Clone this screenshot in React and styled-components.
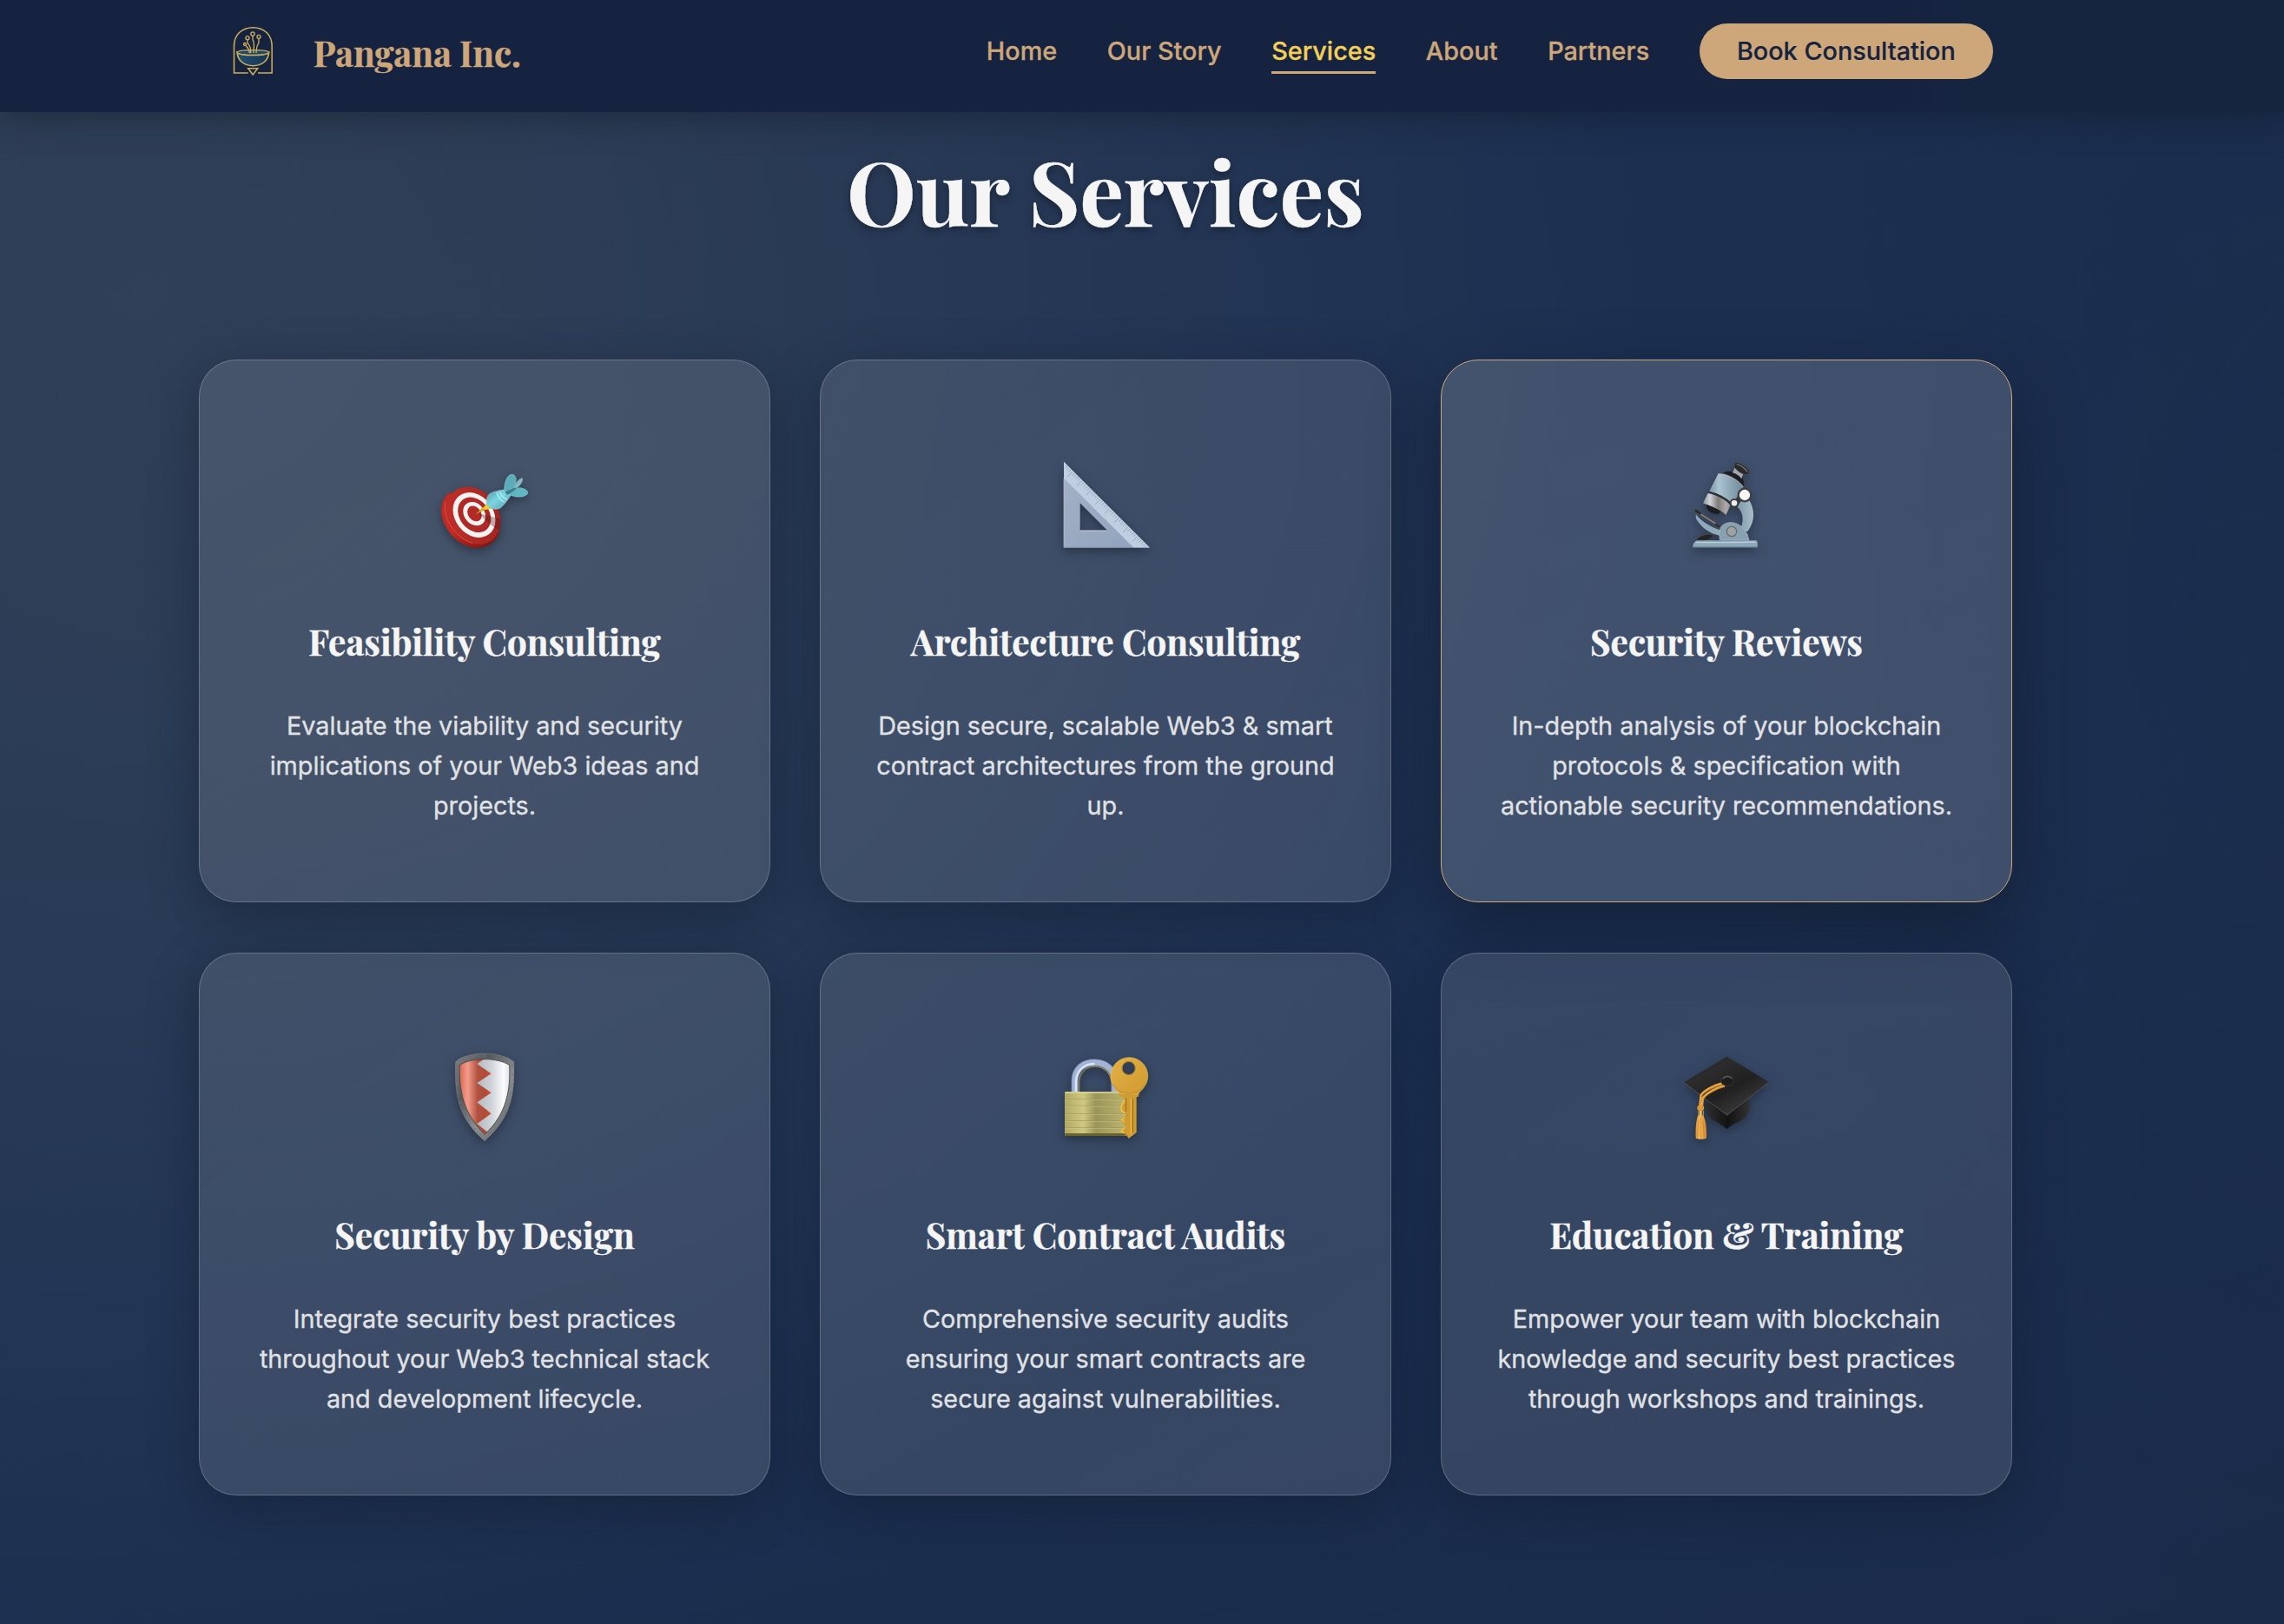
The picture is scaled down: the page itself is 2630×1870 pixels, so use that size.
import React from "react";
import styled, { createGlobalStyle } from "styled-components";

const serif = `"Playfair Display", "Liberation Serif", serif`;
const sans = `Inter, "Liberation Sans", sans-serif`;
const navy = "#152340";
const tan = "#cda67a";

const GlobalStyle = createGlobalStyle`
  *, *::before, *::after { box-sizing: border-box; }
  body { margin: 0; background: #1b2d50; font-family: ${sans}; overflow: hidden; }
  h1, h2, p { margin: 0; }
`;

const Page = styled.div`
  min-height: 1870px;
  background:
    radial-gradient(ellipse 1750px 1600px at 160px 330px, rgba(192, 186, 138, 0.12) 0%, rgba(192, 186, 138, 0.1) 30%, rgba(192, 186, 138, 0) 100%),
    radial-gradient(ellipse 700px 1300px at 2700px 700px, rgba(20, 30, 55, 0.22), rgba(20, 30, 55, 0)),
    linear-gradient(165deg, #1c2e50 0%, #1c3052 60%, #1a2b4a 100%);
`;

const Header = styled.header`
  position: relative;
  z-index: 2;
  height: 129px;
  padding: 27px 335px 0 267px;
  display: flex;
  justify-content: space-between;
  align-items: flex-start;
  background: linear-gradient(90deg, ${navy} 80%, #15253e 100%);
  box-shadow: 0 7px 36px rgba(14, 24, 36, 0.45);
`;

const Brand = styled.div`
  display: flex;
  align-items: center;
  gap: 45px;
  height: 64px;
`;

const BrandName = styled.span`
  padding-top: 2px;
  font: 700 40.32px/52px ${serif};
  color: ${tan};
  -webkit-text-stroke: 0.4px ${tan};
`;

const Nav = styled.nav`
  display: flex;
  align-items: center;
  height: 64px;
  gap: 57.6px;
`;

const NavLink = styled.a`
  font: 500 28.8px/46px ${sans};
  color: ${(p) => (p.$active ? "#f4cf58" : tan)};
  padding-top: 3px;
  border-bottom: 3px solid ${(p) => (p.$active ? tan : "transparent")};
  -webkit-text-stroke: 0.3px currentColor;
  white-space: nowrap;
`;

const BookButton = styled.button`
  height: 64px;
  padding: 0 43.2px;
  border: 0;
  border-radius: 32px;
  background: ${tan};
  color: ${navy};
  font: 500 28.8px/46px ${sans};
  -webkit-text-stroke: 0.2px currentColor;
  white-space: nowrap;
`;

const Main = styled.main`
  padding: 24px 313px 0 229px;
`;

const Heading = styled.h1`
  font: 700 100.8px/132px ${serif};
  text-align: center;
  color: #f5f5f5;
  -webkit-text-stroke: 0.4px #f5f5f5;
  text-shadow: 0 4px 8px rgba(0, 0, 0, 0.35);
`;

const Grid = styled.section`
  margin-top: 129px;
  display: grid;
  grid-template-columns: repeat(3, 1fr);
  grid-template-rows: 625px 625px;
  gap: 58px 57px;
`;

const Card = styled.article`
  display: flex;
  flex-direction: column;
  align-items: center;
  padding: 95px 56.6px 0;
  text-align: center;
  border-radius: 43px;
  border: 1px solid ${(p) => (p.$active ? tan : "rgba(255, 255, 255, 0.2)")};
  background: ${(p) =>
    p.$active
      ? "rgba(255, 255, 255, 0.16)"
      : "linear-gradient(145deg, rgba(255, 255, 255, 0.115), rgba(255, 255, 255, 0.12))"};
  box-shadow: ${(p) =>
    p.$active ? "0 28px 72px rgba(14, 24, 42, 0.62)" : "0 14px 56px rgba(14, 24, 42, 0.45)"};
`;

const Art = styled.svg`
  flex: none;
  width: 160px;
  height: 150px;
  overflow: visible;
  filter: drop-shadow(0 4px 6px rgba(20, 25, 35, 0.5));
`;

const CardTitle = styled.h2`
  margin-top: 48px;
  font: 700 40.32px/60px ${serif};
  color: #f5f5f5;
  -webkit-text-stroke: 0.4px #f5f5f5;
  white-space: nowrap;
`;

const CardText = styled.p`
  margin-top: 45px;
  font: 400 28.8px/46.08px ${sans};
  color: #e0e2e5;
  -webkit-text-stroke: 0.3px #e0e2e5;
`;

const LogoSvg = styled.svg`
  width: 48.67px;
  height: 60.67px;
  flex: none;
`;

function Logo() {
  return (
    <LogoSvg viewBox="142 84 146 182" fill="none" stroke="#cfae5c" strokeWidth="4.6">
      <defs>
        <linearGradient id="bowl" x1="0" y1="0" x2="1" y2="0">
          <stop offset="0" stopColor="#235070" />
          <stop offset="1" stopColor="#153555" />
        </linearGradient>
      </defs>
      <path d="M198 249H149.500V157C149.500 117 176 92 215 92S280.500 117 280.500 157V249H232" />
      <path d="M160 178C162 206 184 224 215 224S268 206 270 178C256 191 174 191 160 178Z" fill="url(#bowl)" />
      <path d="M160 178C163 167 267 167 270 178C262 190 168 190 160 178Z" fill="#1d4a68" strokeWidth="3.500" />
      <path d="M190 155C195 160 201 162 203 180M196 133V146C207 155 208 165 207 180M214 119V134C222 148 217 158 217 180M235 129V146C226 156 228 168 226 180" strokeWidth="4" />
      <g fill={navy} strokeWidth="4">
        <circle cx="187" cy="150" r="4.500" />
        <circle cx="196" cy="128" r="6" />
        <circle cx="214" cy="114" r="6.500" />
        <circle cx="235" cy="124" r="6" />
      </g>
      <path d="M198 233H231L214.500 255Z" fill={navy} />
    </LogoSvg>
  );
}

function Target() {
  return (
    <Art viewBox="-6 0 480 450">
      <defs>
        <linearGradient id="tFace" x1="0" y1="0" x2="1" y2="1">
          <stop offset="0" stopColor="#c4302a" />
          <stop offset="1" stopColor="#9c2420" />
        </linearGradient>
        <linearGradient id="tSide" x1="0" y1="0" x2="1" y2="1">
          <stop offset="0" stopColor="#b82c26" />
          <stop offset=".45" stopColor="#c8281f" />
          <stop offset="1" stopColor="#6c110e" />
        </linearGradient>
        <linearGradient id="tDart" x1="0" y1="0" x2="1" y2="1">
          <stop offset="0" stopColor="#4b9aaa" />
          <stop offset=".45" stopColor="#7ed6e2" />
          <stop offset="1" stopColor="#4a9eae" />
        </linearGradient>
      </defs>
      <path d="M112 170C92 190 79 214 86 252C98 310 152 362 206 363C248 361 274 338 286 308Z" fill="url(#tSide)" />
      <ellipse cx="195" cy="251" rx="86" ry="107" transform="rotate(-38 195 251)" fill="url(#tFace)" />
      <path d="M98 205C88 260 130 325 192 347" fill="none" stroke="#e06a62" strokeWidth="2.500" opacity=".7" />
      <g transform="rotate(-38 198 249)">
        <ellipse cx="198" cy="249" rx="66" ry="84" fill="#f5f3f2" />
        <ellipse cx="199" cy="249" rx="51" ry="66" fill="#ad2a26" />
        <ellipse cx="201" cy="246" rx="35" ry="44" fill="#f5f3f2" />
        <ellipse cx="202" cy="246" rx="22" ry="29" fill="#b22a26" />
      </g>
      <path d="M214 244L286 262C292 275 289 288 282 300C262 290 236 268 214 244Z" fill="#501010" opacity=".32" />
      <path d="M204 246L236 216L243 226Z" fill="#e5b72a" stroke="#a67b12" strokeWidth="1.500" />
      <path d="M231 226C238 219 240 211 242 202L250 218L261 228C251 227 243 229 236 232Z" fill="#f0d02c" />
      <path d="M241 212C240 193 244 180 254 174C273 166 297 160 316 162L328 175C318 192 305 211 289 225C271 233 250 228 241 212Z" fill="url(#tDart)" stroke="#aeb9bd" strokeWidth="2" />
      <path d="M276 172C282 190 290 199 302 204M286 168C291 182 300 191 311 196" stroke="#a7edf3" strokeWidth="5" fill="none" />
      <path d="M336 158C340 140 352 124 364 122C368 134 354 148 342 160Z" fill="#7fb9c1" stroke="#a8bdc1" strokeWidth="2" />
      <path d="M302 162C302 137 311 112 326 109C342 108 345 124 341 142C338 157 322 167 304 168Z" fill="#5cadb9" stroke="#78c9d2" strokeWidth="2" />
      <path d="M316 177C327 162 345 153 361 156C376 159 387 168 382 176C370 190 338 189 316 177Z" fill="#5fb5c0" stroke="#7bd0da" strokeWidth="2" />
      <path d="M304 169C320 162 338 156 349 153C338 163 326 174 312 180Z" fill="#387f8d" />
    </Art>
  );
}

function SetSquare() {
  const ticks = Array.from({ length: 44 }, (_, i) => {
    const t = 12 + i * 6.4;
    const len = i % 5 === 3 ? 18 : 8;
    return `M${105 + t} ${67 + t}l${-len} ${len}`;
  }).join("");
  return (
    <Art viewBox="9 0 480 450">
      <defs>
        <linearGradient id="sqBody" x1="0" y1="0" x2="1" y2="1">
          <stop offset="0" stopColor="#a6b2c6" />
          <stop offset="1" stopColor="#8fa2bd" />
        </linearGradient>
        <clipPath id="sqEdge">
          <path d="M105 65L401 361H345L105 122Z" />
        </clipPath>
      </defs>
      <path fillRule="evenodd" d="M105 65L401 361H105ZM161 208V303H256Z" fill="url(#sqBody)" />
      <path d="M105 65L401 361H345L105 122Z" fill="#c0cee1" />
      <g clipPath="url(#sqEdge)">
        <path d={ticks} stroke="#7c8ea9" strokeWidth="2" fill="none" />
      </g>
      <path d="M161 303H256" stroke="#c9d2df" strokeWidth="3" />
      <path d="M105 122V361H400" fill="none" stroke="#b9c4d4" strokeWidth="2" />
      <path d="M105 360H344" stroke="#7e8ea7" strokeWidth="2" />
    </Art>
  );
}

function Microscope() {
  return (
    <Art viewBox="-6 0 480 450">
      <defs>
        <linearGradient id="mTube" x1="0" y1="0" x2="1" y2="0">
          <stop offset="0" stopColor="#7892a2" />
          <stop offset=".3" stopColor="#abc3d0" />
          <stop offset=".65" stopColor="#8ba5b5" />
          <stop offset="1" stopColor="#6f8a9b" />
        </linearGradient>
        <linearGradient id="mSilver" x1="0" y1="0" x2="1" y2="0">
          <stop offset="0" stopColor="#8b9095" />
          <stop offset=".25" stopColor="#d0d4d8" />
          <stop offset=".55" stopColor="#7e7b7a" />
          <stop offset=".85" stopColor="#b0aba8" />
          <stop offset="1" stopColor="#7c8a94" />
        </linearGradient>
        <linearGradient id="mArm" x1="0" y1="0" x2="1" y2="0">
          <stop offset="0" stopColor="#7f9aab" />
          <stop offset="1" stopColor="#a8bdc9" />
        </linearGradient>
      </defs>
      <path d="M283 202L311 194C333 230 334 270 307 306H278C297 270 292 239 272 221Z" fill="url(#mArm)" />
      <path d="M128 246C150 275 182 291 218 303L210 320C176 314 147 293 129 262Z" fill="#8fa9b9" />
      <path d="M127 226L214 288L209 295L122 236Z" fill="#2a2a2b" stroke="#6b6b6b" strokeWidth="1.500" />
      <path d="M145 246L196 279" stroke="#858585" strokeWidth="5" />
      <path d="M164 211C162 232 179 247 207 246L216 228Z" fill="#1c1d20" />
      <path d="M222 103C232 97 245 97 257 101L258 93L276 104C288 113 296 127 293 151C275 127 250 112 222 103Z" fill="#1d1e21" />
      <path d="M264 83L293 103L286 124C277 112 267 106 255 103Z" fill="#a3a9ae" />
      <path d="M267 66C282 68 300 80 313 96C315 104 309 110 302 110C284 107 269 95 261 83C261 75 262 69 267 66Z" fill="#29292b" stroke="#5b5b5b" strokeWidth="2" />
      <path d="M269 73C283 77 298 88 306 100" stroke="#77777a" strokeWidth="4" fill="none" />
      <path d="M205 107C238 107 279 130 292 153L254 213C235 190 200 177 172 172Z" fill="url(#mTube)" />
      <path d="M205 107C238 107 279 130 292 153" fill="none" stroke="#d8c8ba" strokeWidth="2.500" />
      <path d="M172 169C203 176 232 191 253 212" fill="none" stroke="#292b2e" strokeWidth="5" />
      <path d="M170 174C199 180 230 194 248 216L232 249C215 231 181 219 153 208Z" fill="url(#mSilver)" />
      <path d="M210 333V306C213 285 228 275 249 275C274 275 292 290 306 316L312 336H214Z" fill="#88a1b1" stroke="#a9bdc8" strokeWidth="2" />
      <circle cx="252" cy="306" r="17" fill="#9da2a5" stroke="#696d70" strokeWidth="4" />
      <path d="M131 334C140 319 168 312 189 318C188 331 161 343 132 341Z" fill="#242527" stroke="#505254" strokeWidth="2" />
      <path d="M133 337H337C342 340 342 350 341 361H118V355C120 345 126 339 133 337Z" fill="#8da8ba" />
      <path d="M128 343C180 346 280 342 335 343" stroke="#b9ccd7" strokeWidth="4" fill="none" />
      <path d="M118 360H341" stroke="#5c7486" strokeWidth="3" />
      <circle cx="297" cy="180" r="22" fill="#f7f5f4" stroke="#3f4041" strokeWidth="7" />
      <circle cx="261" cy="208" r="13" fill="#f0eeec" stroke="#3a3b3c" strokeWidth="6" />
    </Art>
  );
}

const rivets = [
  [158, 91], [196, 83], [234, 79], [272, 83], [309, 91], [138, 110], [137, 142], [138, 174],
  [141, 207], [149, 240], [162, 271], [179, 299], [201, 330], [219, 348], [330, 110], [330, 142],
  [329, 174], [326, 207], [318, 240], [306, 271], [288, 299], [267, 322], [249, 344],
];

function Shield() {
  return (
    <Art viewBox="-6 9 480 450">
      <defs>
        <linearGradient id="shFrame" x1="0" y1="0" x2="1" y2="1">
          <stop offset="0" stopColor="#7d8184" />
          <stop offset=".3" stopColor="#56595b" />
          <stop offset=".6" stopColor="#8b8e90" />
          <stop offset="1" stopColor="#5a5d5f" />
        </linearGradient>
        <linearGradient id="shRed" x1="0" y1="0" x2="1" y2="0">
          <stop offset="0" stopColor="#d65a43" />
          <stop offset=".3" stopColor="#f39c8a" />
          <stop offset=".58" stopColor="#b05242" />
          <stop offset=".8" stopColor="#b14a35" />
          <stop offset="1" stopColor="#d4563a" />
        </linearGradient>
        <linearGradient id="shWhite" x1="0" y1="0" x2="1" y2="0">
          <stop offset="0" stopColor="#b4b9be" />
          <stop offset=".4" stopColor="#cfd3d7" />
          <stop offset=".75" stopColor="#fafbfd" />
          <stop offset="1" stopColor="#d2d6dc" />
        </linearGradient>
        <clipPath id="shInner">
          <path d="M148 109C190 82 274 82 320 109C324 195 310 278 235 348C160 278 145 195 148 109Z" />
        </clipPath>
      </defs>
      <path d="M134 98C172 60 294 60 335 98C339 210 325 292 234 371C142 292 130 210 134 98Z" fill="url(#shFrame)" stroke="#8a8e90" strokeWidth="1.500" />
      <g clipPath="url(#shInner)">
        <rect x="140" y="80" width="120" height="280" fill="url(#shRed)" />
        <path d="M242 82L208 105L257 139L208 171L257 205L208 238L257 277L208 312L246 342L330 345V80Z" fill="url(#shWhite)" />
      </g>
      <path d="M148 109C190 82 274 82 320 109C324 195 310 278 235 348C160 278 145 195 148 109Z" fill="none" stroke="#3e4042" strokeWidth="2.500" />
      {rivets.map(([x, y], i) => (
        <circle key={i} cx={x} cy={y} r="2.600" fill="#3e4245" stroke="#a8acae" strokeWidth="1" />
      ))}
    </Art>
  );
}

function LockAndKey() {
  return (
    <Art viewBox="9 9 480 450">
      <defs>
        <linearGradient id="lkBody" x1="0" y1="0" x2="1" y2="0">
          <stop offset="0" stopColor="#b0a964" />
          <stop offset=".3" stopColor="#d0c882" />
          <stop offset=".5" stopColor="#9a9558" />
          <stop offset="1" stopColor="#bcb470" />
        </linearGradient>
        <linearGradient id="lkKey" x1="0" y1="0" x2="1" y2="1">
          <stop offset="0" stopColor="#e3b146" />
          <stop offset="1" stopColor="#d09b31" />
        </linearGradient>
      </defs>
      <path d="M144 205V160C146 118 176 101 211 101C248 101 279 125 281 165V205" fill="none" stroke="#66759a" strokeWidth="27" />
      <path d="M143 205V160C145 118 176 100 211 100C248 100 279 124 281 164V205" fill="none" stroke="#a3b3d4" strokeWidth="20" />
      <path d="M147 205V162C151 124 179 105 211 105" fill="none" stroke="#dbe5f9" strokeWidth="7" />
      <path d="M158 205V165C162 132 185 114 211 114C241 114 265 133 269 165" fill="none" stroke="#8c824e" strokeWidth="4" />
      <rect x="108" y="201" width="214" height="153" rx="4" fill="url(#lkBody)" />
      <path d="M108 345H322L316 354H110Z" fill="#6a622f" />
      <path d="M110 204H320" stroke="#ddd797" strokeWidth="4" />
      <path d="M109 227H320M109 250H320M109 278H320M109 302H320M109 326H320" stroke="#8f8a50" strokeWidth="2" />
      <path d="M109 229H320M109 252H320M109 280H320M109 304H320M109 328H320" stroke="#dad391" strokeWidth="1.500" />
      <path d="M294 200L298 219H311L317 237L303 250V265L324 282L304 296V306L322 320L304 333V340L320 348L329 363L356 342V219H362L367 201Z" fill="#d09c31" />
      <path d="M315 230L304 249V265L315 275M315 291L305 299L315 307M315 325L304 338L315 345" fill="none" stroke="#f2c941" strokeWidth="4" />
      <path d="M343 224V344M320 224V270" stroke="#96671a" strokeWidth="3" />
      <path d="M337 224V350" stroke="#f0c757" strokeWidth="3" />
      <path fillRule="evenodd" d="M330 83A64 64 0 0 0 267 146C267 175 282 197 302 208H358C379 195 395 173 395 146A64 64 0 0 0 330 83ZM329 97A23 23 0 1 1 329 143A23 23 0 1 1 329 97Z" fill="url(#lkKey)" stroke="#e9bf57" strokeWidth="2" />
      <path d="M275 176C295 216 362 219 387 176" fill="none" stroke="#ab7a1c" strokeWidth="2" />
      <circle cx="329" cy="120" r="23" fill="none" stroke="#a97719" strokeWidth="3" />
    </Art>
  );
}

function GraduationCap() {
  return (
    <Art viewBox="-6 9 480 450">
      <defs>
        <linearGradient id="gcTop" x1="0" y1="0" x2=".8" y2="1">
          <stop offset="0" stopColor="#171717" />
          <stop offset=".3" stopColor="#2c2c2c" />
          <stop offset=".6" stopColor="#202020" />
          <stop offset="1" stopColor="#424242" />
        </linearGradient>
        <linearGradient id="gcBase" x1="0" y1="0" x2="1" y2="0">
          <stop offset="0" stopColor="#2f2f30" />
          <stop offset=".5" stopColor="#121213" />
          <stop offset="1" stopColor="#333334" />
        </linearGradient>
        <linearGradient id="gcTassel" x1="0" y1="0" x2="1" y2="0">
          <stop offset="0" stopColor="#e59a35" />
          <stop offset=".4" stopColor="#f2b65a" />
          <stop offset="1" stopColor="#cf8528" />
        </linearGradient>
      </defs>
      <path d="M164 220C159 245 162 277 181 295C198 307 219 314 235 330C252 314 276 307 294 294C311 280 317 255 315 230Z" fill="url(#gcBase)" />
      <path d="M236 80L380 168L236 284L88 169Z" fill="url(#gcTop)" />
      <path d="M89 171L236 282L380 169" fill="none" stroke="#555" strokeWidth="2.500" />
      <path d="M220 173C190 179 149 202 146 216L143 253M228 181C201 187 163 207 153 224L149 253" fill="none" stroke="#b97a26" strokeWidth="9" />
      <path d="M220 172C190 178 149 201 145 216L142 253M228 180C201 186 163 206 152 224L148 253" fill="none" stroke="#f0ae4c" strokeWidth="6" strokeDasharray="6 1" />
      <ellipse cx="237" cy="164" rx="22" ry="17" fill="#1d1d1e" stroke="#454545" strokeWidth="2" />
      <path d="M221 157C229 146 245 146 253 156" stroke="#5d5d5d" strokeWidth="4" fill="none" />
      <rect x="133" y="248" width="23" height="19" rx="8" fill="#df9634" />
      <path d="M136 282H154C164 305 166 330 165 361C159 367 134 367 128 361C127 329 128 304 136 282Z" fill="url(#gcTassel)" />
      <path d="M137 300L134 358M145 292V361M153 300L157 358" stroke="#bb7621" strokeWidth="1.500" />
      <rect x="135" y="267" width="20" height="16" fill="#d8bd73" />
      <path d="M138 267V283M151 267V283" stroke="#695525" strokeWidth="4" />
    </Art>
  );
}

const links = ["Home", "Our Story", "Services", "About", "Partners"];

const services = [
  { title: "Feasibility Consulting", Icon: Target,
    text: "Evaluate the viability and security implications of your Web3 ideas and projects." },
  { title: "Architecture Consulting", Icon: SetSquare,
    text: "Design secure, scalable Web3 & smart contract architectures from the ground up." },
  { title: "Security Reviews", Icon: Microscope, active: true,
    text: "In-depth analysis of your blockchain protocols & specification with actionable security recommendations." },
  { title: "Security by Design", Icon: Shield,
    text: "Integrate security best practices throughout your Web3 technical stack and development lifecycle." },
  { title: "Smart Contract Audits", Icon: LockAndKey,
    text: "Comprehensive security audits ensuring your smart contracts are secure against vulnerabilities." },
  { title: "Education & Training", Icon: GraduationCap,
    text: "Empower your team with blockchain knowledge and security best practices through workshops and trainings." },
];

export default function App() {
  return (
    <Page>
      <GlobalStyle />
      <Header>
        <Brand>
          <Logo />
          <BrandName>Pangana Inc.</BrandName>
        </Brand>
        <Nav>
          {links.map((label) => (
            <NavLink key={label} $active={label === "Services"}>{label}</NavLink>
          ))}
          <BookButton>Book Consultation</BookButton>
        </Nav>
      </Header>
      <Main>
        <Heading>Our Services</Heading>
        <Grid>
          {services.map(({ title, Icon, active, text }) => (
            <Card key={title} $active={active}>
              <Icon />
              <CardTitle>{title}</CardTitle>
              <CardText>{text}</CardText>
            </Card>
          ))}
        </Grid>
      </Main>
    </Page>
  );
}
